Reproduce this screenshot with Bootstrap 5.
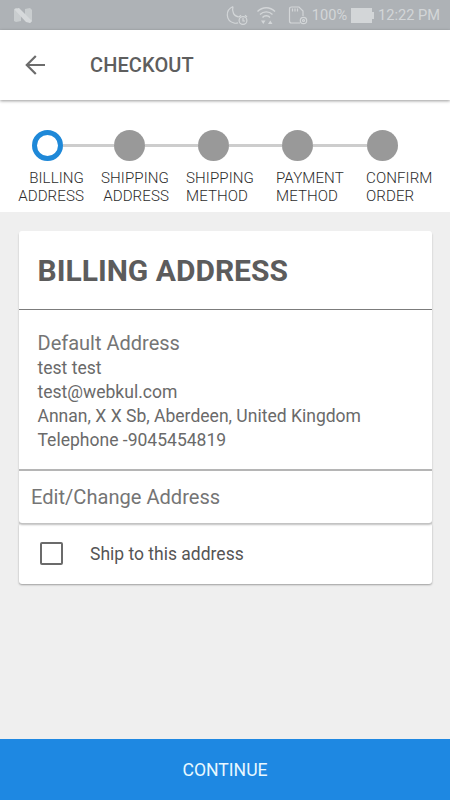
<!DOCTYPE html>
<html lang="en">
  <head>
    <meta charset="UTF-8" />
    <meta name="viewport" content="width=device-width, initial-scale=1.0" />
    <title>Checkout - Billing Address</title>
    <link
      href="https://cdn.jsdelivr.net/npm/bootstrap@5.3.0/dist/css/bootstrap.min.css"
      rel="stylesheet"
    />
    <style>
      body {
        font-family: Roboto, sans-serif;
        background-color: #efefef;
        color: #6a6a6a;
        height: 100vh;
        overflow: hidden;
      }

      .status-bar {
        height: 30px;
        padding: 0 10px 0 13px;
        background-color: #aeb2b6;
        color: #d3d6d8;
        font-size: 14.6px;
        line-height: 30px;
      }

      .app-bar {
        height: 70px;
        padding-left: 25px;
        box-shadow: 0 1px 3px rgba(0, 0, 0, 0.4);
        z-index: 1;
      }

      .app-title {
        margin: 0 0 0 45px;
        font-size: 20px;
        font-weight: 500;
        letter-spacing: 0.1px;
        color: #5e5e5e;
      }

      .stepper {
        height: 112px;
        padding-top: 30px;
      }

      .step-track {
        padding: 0 52.5px 0 32px;
      }

      .step-dot {
        width: 31px;
        height: 31px;
        background-color: #999;
      }

      .step-dot.current {
        background-color: #fff;
        border: 5px solid #1e88d8;
      }

      .step-line {
        height: 3px;
        background-color: #cdcdcd;
      }

      .step-line.short {
        flex: 0 0 51px;
      }

      /* Label columns do not line up with the dots, the first two hug the right edge */
      .step-labels {
        display: grid;
        grid-template-columns: 84px 85px 107px 90px 84px;
        margin-top: 9px;
        font-size: 15.1px;
        font-weight: 300;
        letter-spacing: 0.08px;
        line-height: 17.5px;
        color: #2c2c2c;
      }

      .step-labels .after-gap {
        padding-left: 17px;
      }

      .panel {
        margin: 0 18.5px;
        border-radius: 3px;
        box-shadow: 0 1px 2px rgba(0, 0, 0, 0.35);
      }

      .panel-upper {
        margin-top: 3px;
        box-shadow: 0 2px 2px rgba(0, 0, 0, 0.25);
        z-index: 1;
      }

      .panel-title {
        height: 79px;
        padding: 2px 0 0 19px;
        border-bottom: 1px solid #7c7c7c;
        font-size: 30px;
        font-weight: 700;
        color: #5c5c5c;
      }

      .address {
        height: 161px;
        padding: 20px 0 0 19px;
        border-bottom: 2px solid #b5b5b5;
        font-size: 17.55px;
        line-height: 23.9px;
      }

      .address-heading {
        font-size: 20px;
        line-height: 27px;
        color: #757575;
      }

      .edit-row {
        height: 52px;
        padding: 1px 0 0 12.5px;
        font-size: 20.1px;
        color: #757575;
      }

      .ship-row {
        height: 61px;
        padding-left: 21px;
        font-size: 17.5px;
        color: #555;
      }

      .ship-row label {
        padding-top: 2px;
      }

      .ship-row .form-check-input {
        width: 23px;
        height: 23px;
        margin: 0 27.5px 0 0;
        border: 2px solid #6b6b6b;
        border-radius: 2px;
      }

      .btn-continue {
        height: 61px;
        padding-top: 8px;
        background-color: #1e88e2;
        color: #e8f8ff;
        font-size: 17.6px;
      }
    </style>
  </head>

  <body class="d-flex flex-column">
    <!-- Status bar -->
    <div class="status-bar d-flex align-items-center">
      <svg class="me-auto" width="20" height="15" viewBox="0 0 20 15">
        <path d="M1 2 3 0l5 4v9l-5 1-2-1z" fill="#c9cdcf" />
        <path d="M12 1l5-1 2 2v11l-2 2-5-4z" fill="#c9cdcf" />
        <path d="M1 1l5-1 13 13-2 2-4-1z" fill="#d6d9db" />
      </svg>
      <svg width="82" height="24" viewBox="0 0 82 24" fill="none" stroke="#d3d6d8" stroke-width="1.2">
        <!-- Do not disturb -->
        <path d="M7 3.500C-1 7-.5 18 8 20c1.500.4 3 .3 4-.2M7 3.500C5.500 9 8 13.500 13 14" />
        <circle cx="17" cy="17.500" r="3.900" />
        <path d="M17 15v3h2M13 14l2-1.700M21 14l-2-1.700" />
        <!-- Wifi -->
        <path d="M31.500 8.500c5-5 12.500-5 17.500 0M34 11.500c3.500-3.500 9-3.500 12.500 0M36.500 14.500c2-2.300 5.500-2.300 7.500 0" stroke-width="1.400" />
        <path d="M35 17.500h4.500l-2.200 3.500zM42 21h4.500l-2.200-3.500z" fill="#d3d6d8" stroke="none" />
        <!-- Memory card -->
        <path d="M74 20H65.500Q63.500 20 63.500 18V6q0-2 2-2h7.500l4 4v5" />
        <path d="M66.500 5.500v3M69 5.500v3M71.500 5.500v3" />
        <circle cx="77.500" cy="17.500" r="3.200" />
        <circle cx="77.500" cy="17.500" r="1" />
      </svg>
      <span class="ms-1">100%</span>
      <svg class="ms-1" width="23" height="15" viewBox="0 0 23 15" fill="#d3d6d8">
        <path d="M0 0h21v4h2v7h-2v4H0z" />
      </svg>
      <span class="ms-1">12:22 PM</span>
    </div>

    <!-- App bar -->
    <header class="app-bar bg-white d-flex align-items-center position-relative">
      <svg width="20" height="20" viewBox="0 0 20 20" fill="none" stroke="#6c6c6c" stroke-width="2.200">
        <path d="M20 10H2M10.800 1 1.800 10l9 9" />
      </svg>
      <h1 class="app-title">CHECKOUT</h1>
    </header>

    <!-- Checkout steps -->
    <section class="stepper bg-white">
      <div class="step-track d-flex align-items-center">
        <span class="step-dot current rounded-circle"></span>
        <span class="step-line short"></span>
        <span class="step-dot rounded-circle"></span>
        <span class="step-line flex-fill"></span>
        <span class="step-dot rounded-circle"></span>
        <span class="step-line flex-fill"></span>
        <span class="step-dot rounded-circle"></span>
        <span class="step-line flex-fill"></span>
        <span class="step-dot rounded-circle"></span>
      </div>
      <div class="step-labels">
        <span class="text-end">BILLING<br />ADDRESS</span>
        <span class="text-end">SHIPPING<br />ADDRESS</span>
        <span class="after-gap">SHIPPING<br />METHOD</span>
        <span>PAYMENT<br />METHOD</span>
        <span>CONFIRM<br />ORDER</span>
      </div>
    </section>

    <!-- Billing address -->
    <main class="flex-fill d-flex flex-column pt-3">
      <div class="panel panel-upper bg-white position-relative">
        <h2 class="panel-title d-flex align-items-center mb-0">BILLING ADDRESS</h2>
        <div class="address">
          <div class="address-heading">Default Address</div>
          <div>test test</div>
          <div>test@webkul.com</div>
          <div>Annan, X X Sb, Aberdeen, United Kingdom</div>
          <div>Telephone -9045454819</div>
        </div>
        <div class="edit-row d-flex align-items-center">Edit/Change Address</div>
      </div>
      <div class="panel bg-white">
        <div class="ship-row d-flex align-items-center">
          <input class="form-check-input" type="checkbox" id="shipHere" />
          <label for="shipHere">Ship to this address</label>
        </div>
      </div>
    </main>

    <button class="btn btn-continue rounded-0 border-0 w-100">CONTINUE</button>

    <script src="https://cdn.jsdelivr.net/npm/bootstrap@5.3.0/dist/js/bootstrap.bundle.min.js"></script>
  </body>
</html>
